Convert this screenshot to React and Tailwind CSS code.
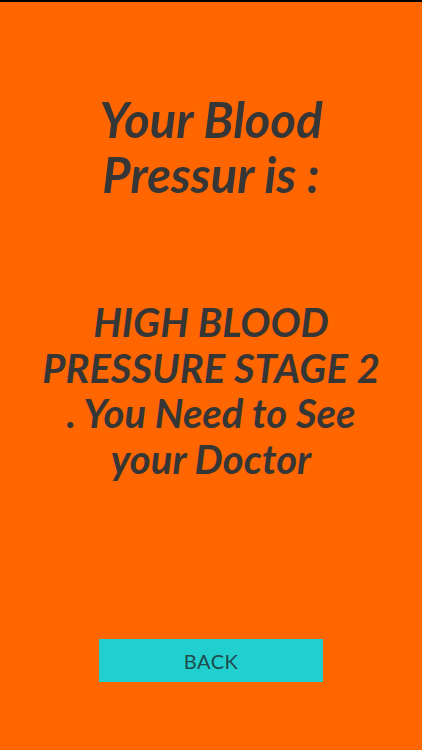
import React from 'react';

function App() {
  return (
    <div className="w-[422px] h-[750px] bg-[#ff6600] border-t-2 border-black flex flex-col items-center" style={{ fontFamily: 'Lato, "Open Sans", sans-serif' }}>
      <h1 className="mt-[90px] text-center text-[49px] leading-[55px] font-bold italic text-[#363636] whitespace-nowrap">
        Your Blood
        <br />
        Pressur is :
      </h1>
      <p className="mt-[98px] text-center text-[40px] leading-[45.5px] font-bold italic text-[#363636] whitespace-nowrap">
        HIGH BLOOD
        <br />
        PRESSURE STAGE 2
        <br />
        . You Need to See
        <br />
        your Doctor
      </p>
      <button className="mt-[157px] w-[224px] h-[43px] bg-[#22cfcf] text-[#1d4a4c] text-[20px] tracking-wide">
        BACK
      </button>
    </div>
  );
}

export default App;
